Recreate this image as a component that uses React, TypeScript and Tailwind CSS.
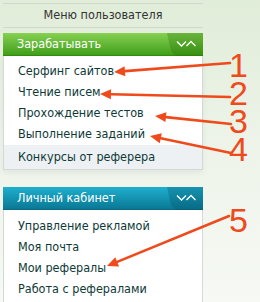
import React from 'react';

const earnItems = ['Серфинг сайтов', 'Чтение писем', 'Прохождение тестов', 'Выполнение заданий'];
const cabinetItems = ['Управление рекламой', 'Моя почта', 'Мои рефералы', 'Работа с рефералами'];

function Chevrons({ tab }: { tab: string }) {
  return (
    <svg width="40" height="23" viewBox="0 0 40 23" className="absolute right-0 top-0">
      <path d="M4 0 H40 V23 H16 Q9 23 7 14 Z" fill={tab} opacity="0.28" />
      <path d="M14 8.5 L18.5 13 L23 8.5" stroke="white" strokeWidth="1.3" fill="none" />
      <path d="M23.5 13 L28 8.5 L32.5 13" stroke="white" strokeWidth="1.3" fill="none" />
    </svg>
  );
}

function Arrow({ x1, y1, x2, y2 }: { x1: number; y1: number; x2: number; y2: number }) {
  // head near the text, tail near the number
  const a = Math.atan2(y1 - y2, x1 - x2);
  const len = 11;
  const w = 5;
  const bx = x1 - len * Math.cos(a);
  const by = y1 - len * Math.sin(a);
  const p1 = `${bx + w * Math.sin(a)},${by - w * Math.cos(a)}`;
  const p2 = `${bx - w * Math.sin(a)},${by + w * Math.cos(a)}`;
  return (
    <g>
      <line x1={bx} y1={by} x2={x2} y2={y2} stroke="#ef4a1c" strokeWidth="2.6" strokeLinecap="round" />
      <polygon points={`${x1},${y1} ${p1} ${p2}`} fill="#ef4a1c" />
    </g>
  );
}

const num = "h-[28px] leading-[28px] text-[34px] text-[#ef4a1c] font-['Liberation_Sans',sans-serif]";

export default function App() {
  return (
    <div className="relative w-[260px] h-[302px] overflow-hidden flex bg-gradient-to-b from-[#e0edd8] via-[#eef4ea] to-[#f6f9f4] font-['DejaVu_Sans',sans-serif]">
      <div className="w-[200px] ml-[3px] pt-[3px] shrink-0 font-stretch-condensed">
        <div className="h-[25px] border-y border-[#cfd8cb] flex items-center justify-center text-[12.5px] text-[#333]">
          Меню пользователя
        </div>

        <div className="mt-[5px] relative h-[23px] bg-gradient-to-b from-[#86d152] to-[#3f9f15] border-b border-[#348a0e] flex items-center pl-[14px] text-[12.5px] text-white">
          Зарабатывать
          <Chevrons tab="#1f6a04" />
        </div>
        <div className="bg-white border-x border-b border-[#d3d9d6] pt-[5px] shadow-[0_3px_6px_rgba(0,0,0,0.06)]">
          {earnItems.map((t) => (
            <div key={t} className="h-[21px] flex items-center pl-[14px] text-[12.5px] text-[#0d3a37]">
              {t}
            </div>
          ))}
          <div className="h-[24px] flex items-center pl-[14px] text-[12.5px] text-[#0d3a37] bg-[#edf1f3]">
            Конкурсы от реферера
          </div>
        </div>

        <div className="mt-[17px] relative h-[23px] bg-gradient-to-b from-[#1eb0cf] to-[#0a7895] border-b border-[#086a84] flex items-center pl-[14px] text-[12.5px] text-white">
          Личный кабинет
          <Chevrons tab="#034a60" />
        </div>
        <div className="bg-white border-x border-[#d3d9d6] pt-[6px] pb-[10px]">
          {cabinetItems.map((t) => (
            <div key={t} className="h-[21px] flex items-center pl-[14px] text-[12.5px] text-[#0d3a37]">
              {t}
            </div>
          ))}
        </div>
      </div>

      <div className="flex flex-col pl-[26px] pt-[51px]">
        <div className={num}>1</div>
        <div className={num}>2</div>
        <div className={num}>3</div>
        <div className={num}>4</div>
        <div className={`${num} mt-[43px]`}>5</div>
      </div>

      <svg className="absolute inset-0 pointer-events-none" width="260" height="302" viewBox="0 0 260 302">
        <Arrow x1={114} y1={72} x2={230} y2={63} />
        <Arrow x1={100} y1={94} x2={230} y2={97} />
        <Arrow x1={155} y1={116} x2={231} y2={124} />
        <Arrow x1={150} y1={136} x2={231} y2={153} />
        <Arrow x1={107} y1={266} x2={229} y2={216} />
      </svg>
    </div>
  );
}
